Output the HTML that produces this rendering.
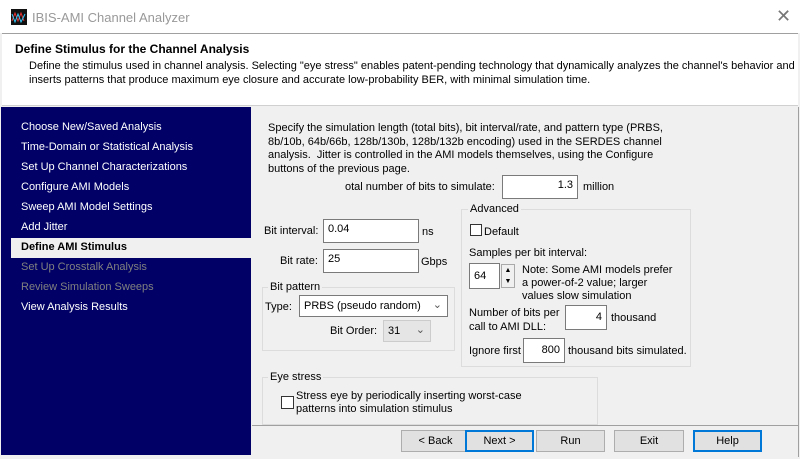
<!DOCTYPE html>
<html><head><style>
body{margin:0;width:800px;height:459px;overflow:hidden;background:#f0f0f0;font-family:"Liberation Sans",sans-serif;font-size:11px;color:#000;position:relative}
.a{position:absolute;white-space:nowrap}
.in{position:absolute;background:#fff;border:1px solid #7a7a7a;box-sizing:border-box;font-size:11px;padding:3px 4px}
.gb{position:absolute;border:1px solid #dcdcdc;box-sizing:border-box}
.gl{position:absolute;background:#f0f0f0;padding:0 2px;white-space:nowrap}
.nav{position:absolute;left:21px;color:#fff;font-size:11px}
.btn{position:absolute;top:430px;height:22px;background:#e1e1e1;border:1px solid #adadad;box-sizing:border-box;text-align:center;line-height:20px}
.btn.b{border:2px solid #0078d7;line-height:18px}
.cb{position:absolute;width:12px;height:12px;border:1px solid #333;background:#fff;box-sizing:border-box}
</style></head><body>
<div class="a" style="left:0;top:0;width:800px;height:33px;background:#fff"></div>
<div class="a" style="left:11px;top:9px;width:16px;height:16px;background:#111"><svg width="16" height="16"><path d="M1 12 L4 4 L7 12 L10 4 L13 12" stroke="#e33" fill="none"/><path d="M1 5 L4 13 L7 5 L10 13 L14 5" stroke="#3cf" fill="none"/></svg></div>
<div class="a" style="left:32px;top:10px;font-size:13px;color:#999">IBIS-AMI Channel Analyzer</div>
<div class="a" style="left:776px;top:6px;font-size:18px;color:#777">✕</div>
<div class="a" style="left:2px;top:33px;width:796px;height:73px;background:#fff;border-top:1px solid #a0a0a0;border-bottom:1px solid #d0d0d0;box-sizing:border-box"></div>
<div class="a" style="left:15px;top:42px;font-weight:bold;font-size:12px">Define Stimulus for the Channel Analysis</div>
<div class="a" style="left:29px;top:60px">Define the stimulus used in channel analysis. Selecting "eye stress" enables patent-pending technology that dynamically analyzes the channel's behavior and</div>
<div class="a" style="left:29px;top:74px">inserts patterns that produce maximum eye closure and accurate low-probability BER, with minimal simulation time.</div>
<div class="a" style="left:1px;top:107px;width:250px;height:348px;background:#000066"></div>
<div class="a" style="left:11px;top:238px;width:240px;height:20px;background:#f0f0f0"></div>
<div class="nav" style="top:121px">Choose New/Saved Analysis</div>
<div class="nav" style="top:141px">Time-Domain or Statistical Analysis</div>
<div class="nav" style="top:161px">Set Up Channel Characterizations</div>
<div class="nav" style="top:181px">Configure AMI Models</div>
<div class="nav" style="top:201px">Sweep AMI Model Settings</div>
<div class="nav" style="top:221px">Add Jitter</div>
<div class="nav" style="top:241px;color:#000;font-weight:bold">Define AMI Stimulus</div>
<div class="nav" style="top:261px;color:#808080">Set Up Crosstalk Analysis</div>
<div class="nav" style="top:281px;color:#808080">Review Simulation Sweeps</div>
<div class="nav" style="top:301px">View Analysis Results</div>
<div class="a" style="left:268px;top:122px;line-height:13.5px">Specify the simulation length (total bits), bit interval/rate, and pattern type (PRBS,<br>8b/10b, 64b/66b, 128b/130b, 128b/132b encoding) used in the SERDES channel<br>analysis.&nbsp; Jitter is controlled in the AMI models themselves, using the Configure<br>buttons of the previous page.</div>
<div class="a" style="left:345px;top:181px">otal number of bits to simulate:</div>
<div class="in" style="left:502px;top:175px;width:76px;height:24px;text-align:right">1.3</div>
<div class="a" style="left:583px;top:181px">million</div>
<div class="a" style="left:264px;top:225px">Bit interval:</div>
<div class="in" style="left:323px;top:219px;width:96px;height:24px">0.04</div>
<div class="a" style="left:422px;top:226px">ns</div>
<div class="a" style="left:280px;top:255px">Bit rate:</div>
<div class="in" style="left:323px;top:249px;width:96px;height:24px">25</div>
<div class="a" style="left:421px;top:256px">Gbps</div>
<div class="gb" style="left:262px;top:287px;width:193px;height:64px"></div>
<div class="gl" style="left:268px;top:281px">Bit pattern</div>
<div class="a" style="left:265px;top:301px">Type:</div>
<div class="in" style="left:299px;top:295px;width:149px;height:22px;padding:4px 4px">PRBS (pseudo random)<span style="position:absolute;right:5px;top:2px;color:#555">⌄</span></div>
<div class="a" style="left:330px;top:325px">Bit Order:</div>
<div class="in" style="left:383px;top:320px;width:48px;height:22px;background:#e5e5e5;border-color:#ccc;padding:4px 4px">31<span style="position:absolute;right:5px;top:2px;color:#555">⌄</span></div>
<div class="gb" style="left:461px;top:209px;width:230px;height:158px"></div>
<div class="gl" style="left:468px;top:203px">Advanced</div>
<div class="cb" style="left:470px;top:224px"></div>
<div class="a" style="left:484px;top:226px">Default</div>
<div class="a" style="left:469px;top:247px">Samples per bit interval:</div>
<div class="in" style="left:469px;top:263px;width:31px;height:26px;padding:6px 4px">64</div>
<div class="a" style="left:501px;top:264px;width:14px;height:24px;border:1px solid #aaa;box-sizing:border-box;background:#f0f0f0;font-size:7px;text-align:center;line-height:11px">▲<br>▼</div>
<div class="a" style="left:522px;top:264px;line-height:13px">Note: Some AMI models prefer<br>a power-of-2 value; larger<br>values slow simulation</div>
<div class="a" style="left:469px;top:306px;line-height:14px">Number of bits per<br>call to AMI DLL:</div>
<div class="in" style="left:565px;top:305px;width:42px;height:25px;text-align:right;padding-top:5px">4</div>
<div class="a" style="left:611px;top:312px">thousand</div>
<div class="a" style="left:469px;top:345px">Ignore first</div>
<div class="in" style="left:523px;top:338px;width:42px;height:25px;text-align:right;padding-top:5px">800</div>
<div class="a" style="left:568px;top:345px">thousand bits simulated.</div>
<div class="gb" style="left:262px;top:377px;width:336px;height:48px"></div>
<div class="gl" style="left:268px;top:371px">Eye stress</div>
<div class="cb" style="left:281px;top:396px;width:13px;height:13px"></div>
<div class="a" style="left:296px;top:390px;line-height:13px">Stress eye by periodically inserting worst-case<br>patterns into simulation stimulus</div>
<div class="a" style="left:252px;top:425px;width:546px;height:1px;background:#a0a0a0"></div>
<div class="a" style="left:798px;top:107px;width:1px;height:350px;background:#a0a0a0"></div>
<div class="btn" style="left:401px;width:69px">&lt; Back</div>
<div class="btn b" style="left:465px;width:69px">Next &gt;</div>
<div class="btn" style="left:536px;width:69px">Run</div>
<div class="btn" style="left:614px;width:70px">Exit</div>
<div class="btn b" style="left:693px;width:69px">Help</div>
</body></html>
